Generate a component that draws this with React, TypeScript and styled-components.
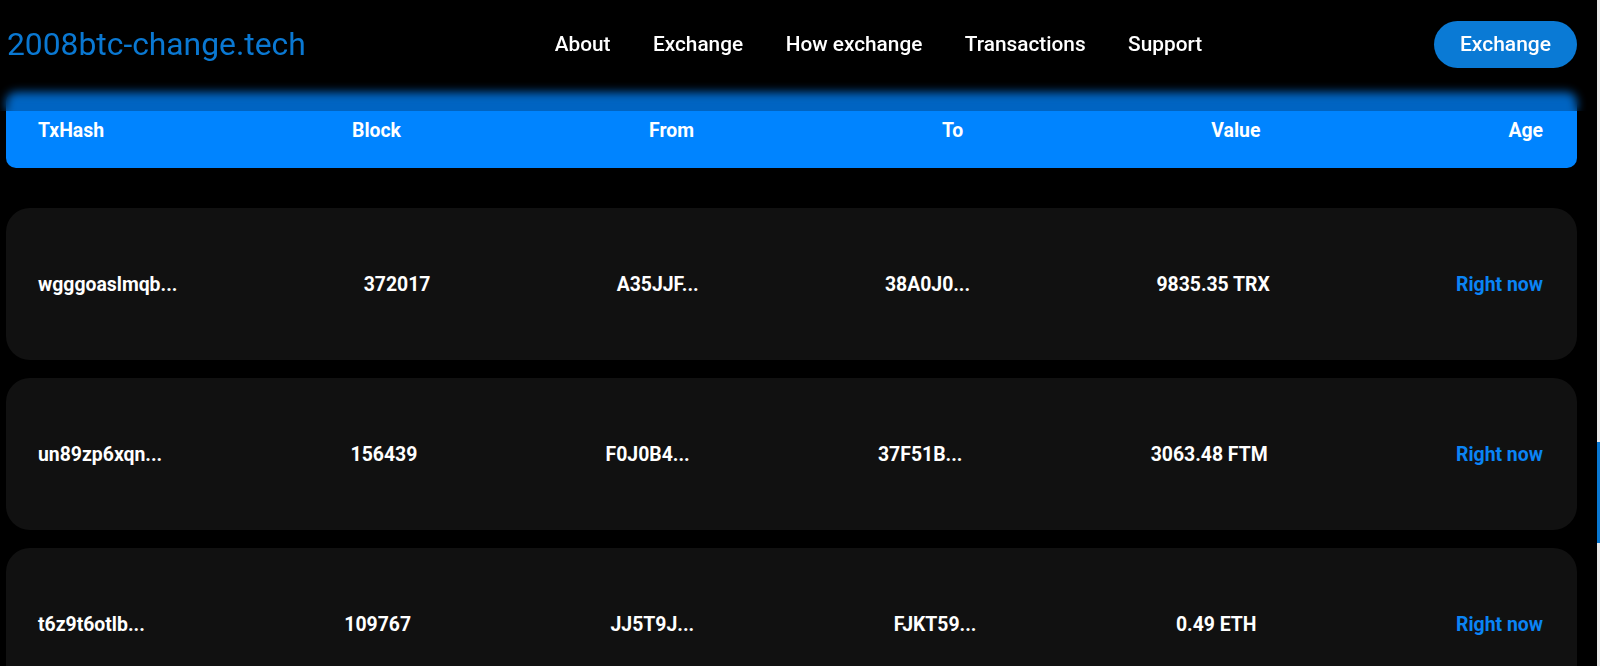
import React from "react";
import styled, { createGlobalStyle } from "styled-components";

const GlobalStyle = createGlobalStyle`
  html, body {
    margin: 0;
    padding: 0;
    background: #000;
    overflow: hidden;
  }
  body {
    font-family: Roboto, "Liberation Sans", Arial, sans-serif;
    color: #fff;
  }
  * {
    box-sizing: border-box;
  }
`;

type Tx = {
  hash: string;
  block: string;
  from: string;
  to: string;
  value: string;
  age: string;
};

const TXS: Tx[] = [
  { hash: "wgggoaslmqb...", block: "372017", from: "A35JJF...", to: "38A0J0...", value: "9835.35 TRX", age: "Right now" },
  { hash: "un89zp6xqn...", block: "156439", from: "F0J0B4...", to: "37F51B...", value: "3063.48 FTM", age: "Right now" },
  { hash: "t6z9t6otlb...", block: "109767", from: "JJ5T9J...", to: "FJKT59...", value: "0.49 ETH", age: "Right now" }
];

const NAV = ["About", "Exchange", "How exchange", "Transactions", "Support"];

const Header = styled.header`
  position: fixed;
  top: 0;
  left: 0;
  right: 0;
  height: 111px;
  z-index: 10;
  display: flex;
  align-items: center;
  padding: 0 23px 23px 7px;
  background: rgba(0, 0, 0, 0.24);
  backdrop-filter: blur(5px);
  -webkit-backdrop-filter: blur(5px);
`;

const Logo = styled.a`
  font-size: 31.8px;
  font-weight: 400;
  color: #0a78d2;
  text-decoration: none;
  white-space: nowrap;
`;

const Nav = styled.nav`
  display: flex;
  gap: 42.5px;
  margin-left: 249px;
`;

const NavLink = styled.a`
  font-size: 20.8px;
  font-weight: 500;
  color: #fff;
  text-decoration: none;
  white-space: nowrap;
`;

const HeaderButton = styled.button`
  margin-left: auto;
  height: 47px;
  padding: 0 26px;
  border: none;
  border-radius: 24px;
  background: #0a7ad5;
  color: #fff;
  font-family: inherit;
  font-size: 21px;
  font-weight: 500;
  cursor: pointer;
`;

const Main = styled.main`
  padding: 92px 23px 0 6px;
`;

const TableHead = styled.div`
  display: flex;
  justify-content: space-between;
  align-items: center;
  height: 76px;
  padding: 0 34px 0 32px;
  background: #0084ff;
  border-radius: 10px;
  font-size: 19.4px;
  font-weight: 700;
  color: #fff;
`;

const Rows = styled.div`
  display: flex;
  flex-direction: column;
  gap: 18px;
  margin-top: 40px;
`;

const Row = styled.div`
  display: flex;
  justify-content: space-between;
  align-items: center;
  height: 152px;
  padding: 0 34px 0 32px;
  background: #111111;
  border-radius: 24px;
  font-size: 19.4px;
  font-weight: 700;
`;

const Cell = styled.span<{ $accent?: boolean }>`
  white-space: nowrap;
  color: ${(p) => (p.$accent ? "#0a84f5" : "#fff")};
`;

const ScrollTrack = styled.div`
  position: fixed;
  top: 0;
  right: 0;
  width: 3px;
  height: 100%;
  background: #e9e9e9;
  z-index: 20;
`;

const ScrollThumb = styled.div`
  position: absolute;
  top: 442px;
  left: 0;
  width: 3px;
  height: 101px;
  background: #0a78d2;
`;

export default function App() {
  return (
    <>
      <GlobalStyle />
      <Header>
        <Logo href="#">2008btc-change.tech</Logo>
        <Nav>
          {NAV.map((item) => (
            <NavLink key={item} href="#">
              {item}
            </NavLink>
          ))}
        </Nav>
        <HeaderButton>Exchange</HeaderButton>
      </Header>
      <Main>
        <TableHead>
          <span>TxHash</span>
          <span>Block</span>
          <span>From</span>
          <span>To</span>
          <span>Value</span>
          <span>Age</span>
        </TableHead>
        <Rows>
          {TXS.map((tx) => (
            <Row key={tx.hash}>
              <Cell>{tx.hash}</Cell>
              <Cell>{tx.block}</Cell>
              <Cell>{tx.from}</Cell>
              <Cell>{tx.to}</Cell>
              <Cell>{tx.value}</Cell>
              <Cell $accent>{tx.age}</Cell>
            </Row>
          ))}
        </Rows>
      </Main>
      <ScrollTrack>
        <ScrollThumb />
      </ScrollTrack>
    </>
  );
}
